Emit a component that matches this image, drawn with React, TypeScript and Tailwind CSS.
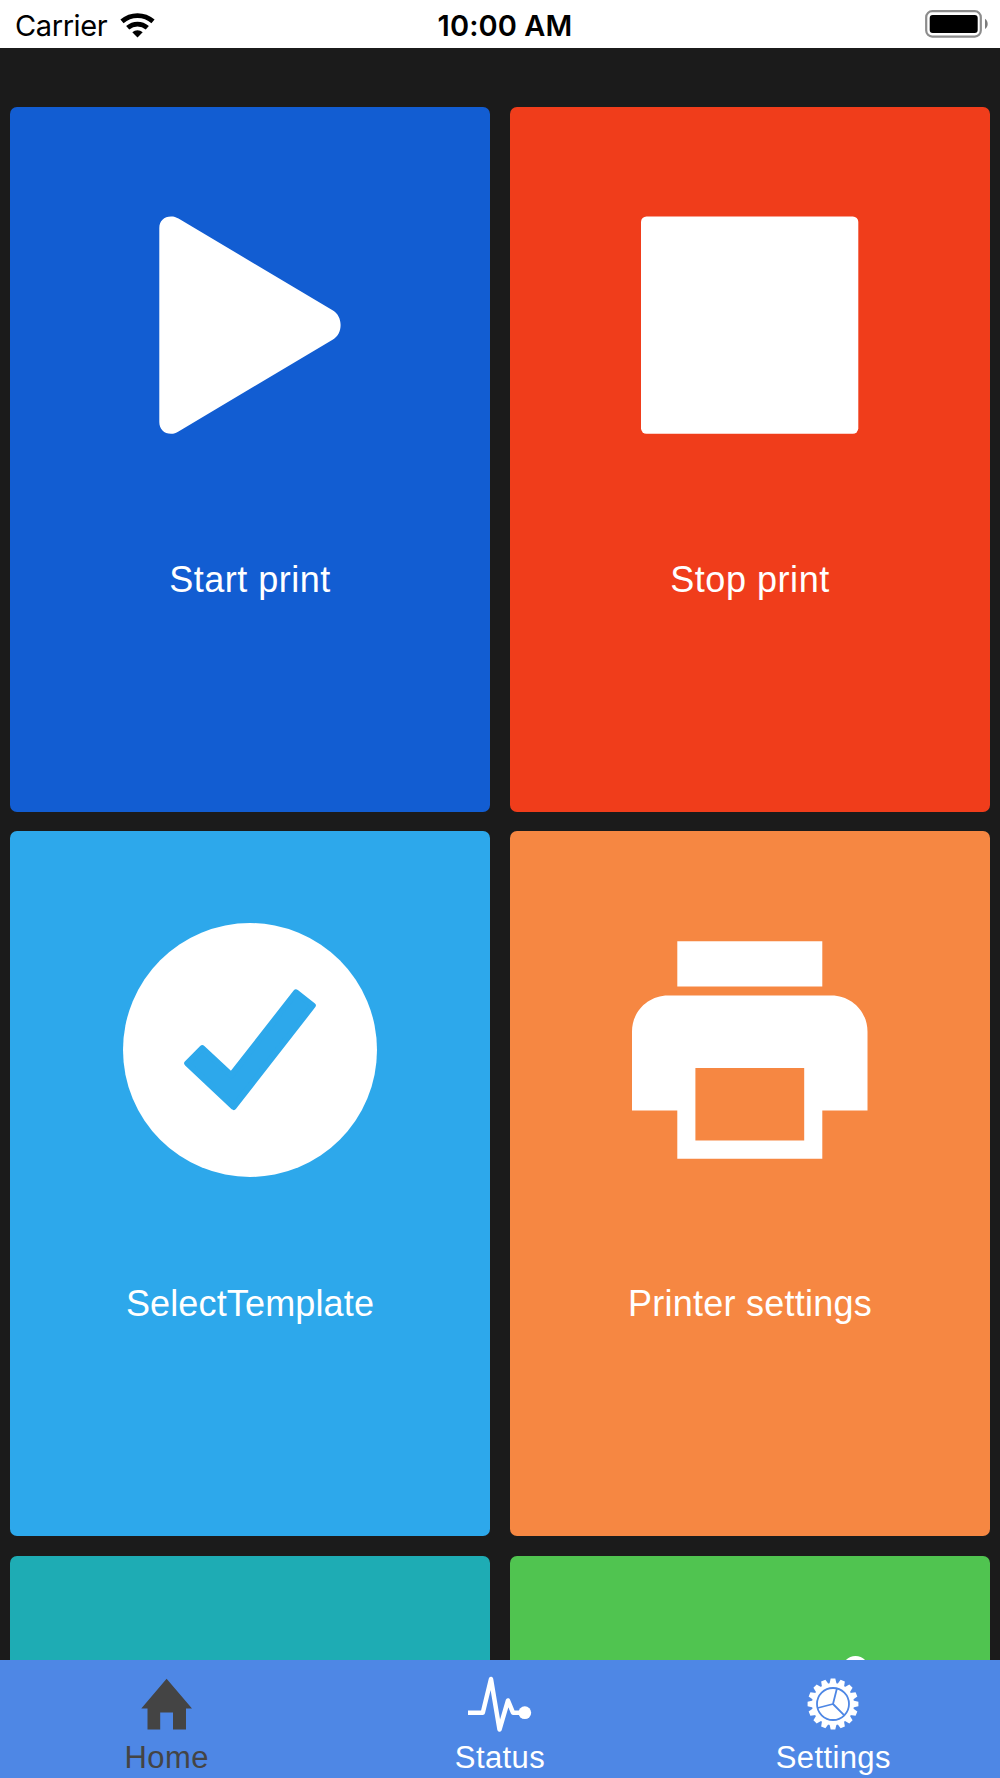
import type { ReactNode } from "react";

function PlayIcon() {
  return (
    <svg width="256" height="256" viewBox="0 0 256 256" fill="white" aria-hidden="true">
      <path d="M37.3 31C37.3 24 42 19.4 49 19.4C52 19.4 54 20 56.5 21.5L211 113.5C216 116.5 218.6 122 218.6 128C218.6 134 216 139.5 211 142.5L56.5 234.5C54 236 52 236.8 49 236.8C42 236.8 37.3 232 37.3 225Z" />
    </svg>
  );
}

function StopIcon() {
  return (
    <svg width="256" height="256" viewBox="0 0 256 256" fill="white" aria-hidden="true">
      <rect x="19" y="19.4" width="217.3" height="217.4" rx="5.5" />
    </svg>
  );
}

function CheckIcon() {
  return (
    <svg width="256" height="256" viewBox="0 0 256 256" aria-hidden="true">
      <circle cx="128" cy="128" r="127" fill="white" />
      <path
        d="M65.2 141.3L80.3 126.2L109.3 153.2L174 70.3L190.8 83.5L111.7 185Z"
        fill="#2da8eb"
        stroke="#2da8eb"
        strokeWidth="6"
        strokeLinejoin="round"
      />
    </svg>
  );
}

function PrinterIcon() {
  return (
    <svg width="256" height="256" viewBox="0 0 256 256" fill="white" aria-hidden="true">
      <path d="M55.3 19.2H200.3V64.6H55.3Z" />
      <path
        fillRule="evenodd"
        d="M46 73.4H209.5C229.5 73.4 245.5 89.5 245.5 109.5V188.5H200.3V236.8H55.3V188.5H10V109.5C10 89.5 26 73.4 46 73.4ZM73.4 146V218.5H182.2V146Z"
      />
    </svg>
  );
}

function PersonIcon() {
  return (
    <svg width="256" height="256" viewBox="0 0 256 256" fill="white" aria-hidden="true">
      <circle cx="233.5" cy="23.5" r="13.5" />
    </svg>
  );
}

function WifiIcon() {
  return (
    <svg width="35" height="25" viewBox="0 0 35 25" aria-hidden="true">
      <g fill="none" stroke="black" strokeWidth="4.8">
        <path d="M2 8.4C11 .6 24 .6 33 8.4" />
        <path d="M7.7 14.8C13.5 9.8 21.5 9.8 27.3 14.8" />
      </g>
      <path d="M12.3 19.3C15.4 16.4 19.6 16.4 22.7 19.3L17.5 24.6Z" />
    </svg>
  );
}

function BatteryIcon() {
  return (
    <svg width="64" height="28" viewBox="0 0 64 28" aria-hidden="true">
      <rect x="1.2" y="1.2" width="54.6" height="25.4" rx="6" fill="none" stroke="#8c8c8c" strokeWidth="2.2" />
      <rect x="4.7" y="4.9" width="48" height="18" rx="3" />
      <path d="M60 8.8C63.6 11 63.6 17 60 19Z" fill="#7c7c7c" />
    </svg>
  );
}

function HomeIcon() {
  return (
    <svg width="64" height="64" viewBox="0 0 64 64" fill="#444444" aria-hidden="true">
      <path d="M31.6 6.8L57 36.5H51V57.5H38V40.5H25.2V57.5H12.5V36.5H6.3Z" />
    </svg>
  );
}

function PulseIcon() {
  return (
    <svg width="64" height="64" viewBox="0 0 64 64" aria-hidden="true">
      <path
        d="M0 40.7H14.8L23 7L31.5 57.5L40 28.5L45 40.7H57"
        fill="none"
        stroke="white"
        strokeWidth="4.5"
        strokeLinejoin="round"
      />
      <circle cx="56.8" cy="40.7" r="6.4" fill="white" />
    </svg>
  );
}

function GearIcon() {
  return (
    <svg width="64" height="64" viewBox="0 0 64 64" aria-hidden="true">
      <circle cx="32" cy="32" r="21" fill="white" />
      {Array.from({ length: 16 }, (_, i) => (
        <path key={i} d="M28.4 12L29.7 6.6H34.3L35.6 12Z" fill="white" transform={`rotate(${i * 22.5} 32 32)`} />
      ))}
      <g fill="none" stroke="#4e87e5" strokeWidth="1.8">
        <circle cx="32" cy="32" r="16" />
        <path d="M32 32L35.9 16.5M32 32L16.5 36M32 32L43.3 43.3" />
      </g>
    </svg>
  );
}

type TileProps = { className: string; label?: string; icon?: ReactNode };

function Tile({ className, label, icon }: TileProps) {
  return (
    <button className={`flex h-[705px] flex-col items-center rounded-[7px] text-white ${className}`}>
      <span className="flex h-[437px] items-center">{icon}</span>
      <span className="mt-3.5 text-[36px] leading-[44px]">{label}</span>
    </button>
  );
}

type TabProps = { className: string; label: string; icon: ReactNode };

function Tab({ className, label, icon }: TabProps) {
  return (
    <button className={`flex flex-1 flex-col items-center pt-3 ${className}`}>
      {icon}
      <span className="mt-1 text-[31px] leading-9">{label}</span>
    </button>
  );
}

export default function App() {
  return (
    <div className="flex h-[1778px] w-[1000px] flex-col overflow-hidden bg-[#1b1b1b] font-['Liberation_Sans',Arial,sans-serif]">
      {/* Status bar */}
      <header className="grid h-12 shrink-0 grid-cols-3 items-center bg-white px-[15px] pt-[3px] font-['Inter',sans-serif] text-[29px] leading-9 text-black">
        <div className="flex items-center gap-[13px]">
          <span className="tracking-[-0.4px]">Carrier</span>
          <WifiIcon />
        </div>
        <span className="pl-[10px] text-center font-semibold tracking-[0.1px] whitespace-nowrap">10:00 AM</span>
        <div className="-mt-[3px] -mr-[4px] flex justify-end">
          <BatteryIcon />
        </div>
      </header>

      {/* Tiles */}
      <main className="min-h-0 flex-1 overflow-hidden px-2.5 pt-[58.5px]">
        <div className="grid grid-cols-2 gap-x-5 gap-y-[19.5px]">
          <Tile className="bg-[#125dd2] tracking-[0.5px]" label="Start print" icon={<PlayIcon />} />
          <Tile className="bg-[#f03d1b] tracking-[0.55px]" label="Stop print" icon={<StopIcon />} />
          <Tile className="bg-[#2da8eb] tracking-[0.15px]" label="SelectTemplate" icon={<CheckIcon />} />
          <Tile className="bg-[#f68742] tracking-[0.25px]" label="Printer settings" icon={<PrinterIcon />} />
          <Tile className="bg-[#1eacb4]" />
          <Tile className="bg-[#50c450]" icon={<PersonIcon />} />
        </div>
      </main>

      {/* Tab bar */}
      <nav className="flex h-[118px] shrink-0 bg-[#4e87e5] text-white">
        <Tab className="tracking-[0.4px] text-[#444444]" label="Home" icon={<HomeIcon />} />
        <Tab className="tracking-[0.4px] text-white" label="Status" icon={<PulseIcon />} />
        <Tab className="tracking-[0.4px] text-white" label="Settings" icon={<GearIcon />} />
      </nav>
    </div>
  );
}
